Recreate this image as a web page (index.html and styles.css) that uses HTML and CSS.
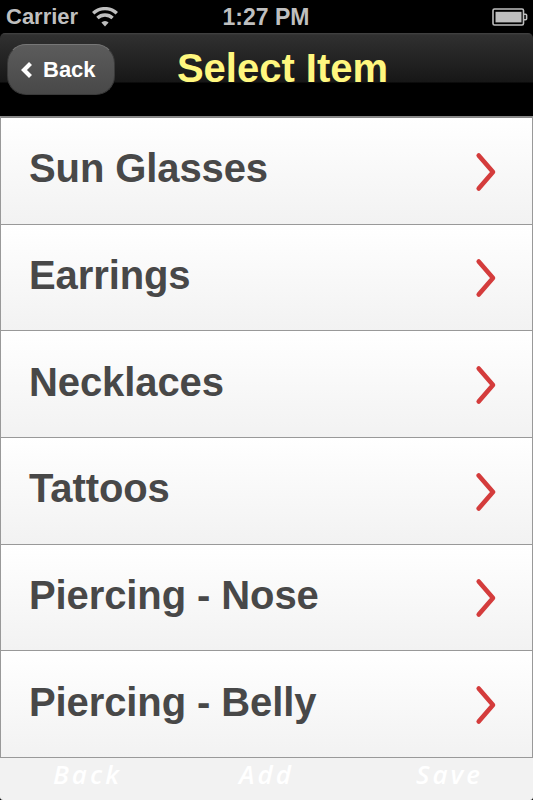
FILE: index.html
```
<!DOCTYPE html>
<html lang="en">
<head>
  <meta charset="UTF-8">
  <meta name="viewport" content="width=device-width, initial-scale=1.0">
  <link rel="stylesheet" href="styles.css">
  <title>Select Item</title>
</head>
<body>

<div class="status-bar">
  <div class="carrier">
    <span class="carrier-name">Carrier</span>
    <svg class="wifi" width="26" height="20" viewBox="0 0 26 20">
      <path d="M1.2 6.3a17.2 17.2 0 0 1 23.6 0" />
      <path d="M5.4 11a11.2 11.2 0 0 1 15.2 0" />
      <path class="dot" d="M13 19.6l-3.6-4a4.8 4.8 0 0 1 7.2 0z" />
    </svg>
  </div>
  <span class="clock">1:27 PM</span>
  <svg class="battery" width="36" height="18" viewBox="0 0 36 18">
    <rect class="case" x="1" y="1" width="30.5" height="16" rx="1.5" />
    <rect class="charge" x="3.5" y="3.8" width="26" height="10.6" />
    <path class="case" d="M32 6.2h1.6q1 0 1 1v3.6q0 1-1 1h-1.6" />
  </svg>
</div>

<header class="header">
  <button class="back-button">
    <svg width="12" height="18" viewBox="0 0 12 18">
      <path d="M9.5 2.5L3 9l6.5 6.5" />
    </svg>
    <span>Back</span>
  </button>
  <h1>Select Item</h1>
</header>

<ul class="list">
  <li><span>Sun Glasses</span><svg class="arrow" width="22" height="40" viewBox="0 0 22 40"><path d="M3.7 3.5L18 20L3.7 36.5" /></svg></li>
  <li><span>Earrings</span><svg class="arrow" width="22" height="40" viewBox="0 0 22 40"><path d="M3.7 3.5L18 20L3.7 36.5" /></svg></li>
  <li><span>Necklaces</span><svg class="arrow" width="22" height="40" viewBox="0 0 22 40"><path d="M3.7 3.5L18 20L3.7 36.5" /></svg></li>
  <li><span>Tattoos</span><svg class="arrow" width="22" height="40" viewBox="0 0 22 40"><path d="M3.7 3.5L18 20L3.7 36.5" /></svg></li>
  <li><span>Piercing - Nose</span><svg class="arrow" width="22" height="40" viewBox="0 0 22 40"><path d="M3.7 3.5L18 20L3.7 36.5" /></svg></li>
  <li><span>Piercing - Belly</span><svg class="arrow" width="22" height="40" viewBox="0 0 22 40"><path d="M3.7 3.5L18 20L3.7 36.5" /></svg></li>
</ul>

<footer class="footer">
  <span>Back</span>
  <span class="footer-add">Add</span>
  <span>Save</span>
</footer>

</body>
</html>
```

FILE: styles.css
```
* {
  box-sizing: border-box;
}

body {
  display: flex;
  flex-direction: column;
  height: 100vh;
  margin: 0;
  overflow: hidden;
  background: #000;
  font-family: "Liberation Sans", Arial, sans-serif;
  font-weight: bold;
}

.status-bar {
  display: grid;
  grid-template-columns: 1fr auto 1fr;
  align-items: center;
  height: 33px;
  padding: 0 5px 0 6px;
  color: #bfbfbf;
  font-size: 23px;
}

.carrier {
  display: flex;
  align-items: center;
  gap: 14px;
}

.carrier-name {
  font-size: 22px;
}

.clock {
  padding: 1px 2px 0 0;
}

.wifi {
  fill: none;
  stroke: #bfbfbf;
  stroke-width: 3.4;
}

.wifi .dot {
  fill: #bfbfbf;
  stroke: none;
}

.battery {
  justify-self: end;
}

.battery .case {
  fill: none;
  stroke: #bfbfbf;
  stroke-width: 1.6;
}

.battery .charge {
  fill: #bfbfbf;
}

.header {
  display: grid;
  grid-template-columns: 108px 1fr 76px;
  align-items: start;
  height: 83px;
  padding: 11px 7px 0;
  border-radius: 5px 5px 0 0;
  background: linear-gradient(#444 0, #303030 2px, #171717 49px, #000 50px);
}

.header h1 {
  margin: 1px 0 0;
  color: #fff77f;
  font-size: 40px;
  line-height: 46px;
  text-align: center;
}

.back-button {
  display: flex;
  align-items: center;
  gap: 10px;
  height: 51px;
  padding: 0 0 0 13px;
  border: 1px solid #3a3a3a;
  border-top-color: #777;
  border-radius: 19px;
  background: linear-gradient(#5c5c5c, #484848);
  color: #fff;
  font: bold 22px "Liberation Sans", Arial, sans-serif;
}

.back-button path {
  fill: none;
  stroke: #fff;
  stroke-width: 4.2;
}

.list {
  display: grid;
  grid-template-rows: repeat(6, 1fr);
  height: 642px;
  margin: 0;
  padding: 0;
  border: 1px solid #999;
  border-width: 2px 1px 0;
  border-top-color: #888;
  list-style: none;
}

.list li {
  display: flex;
  align-items: center;
  justify-content: space-between;
  padding: 0 35px 0 28px;
  border-bottom: 1px solid #999;
  background: linear-gradient(#fff, #f2f2f2);
  color: #484848;
  font-size: 40px;
  letter-spacing: -0.1px;
}

.list span {
  padding-bottom: 4px;
}

.arrow {
  margin-top: 2px;
}

.arrow path {
  fill: none;
  stroke: #d43c3c;
  stroke-width: 4.6;
  stroke-linecap: round;
  stroke-linejoin: round;
}

.footer {
  display: flex;
  flex: 1;
  justify-content: space-between;
  padding: 0 50px 0 53px;
  border-radius: 0 0 3px 3px;
  background: #f2f2f2;
  color: #fff;
  font: italic 600 26px/33px "Open Sans", sans-serif;
  letter-spacing: 3px;
}

.footer-add {
  padding-right: 5px;
}
```
